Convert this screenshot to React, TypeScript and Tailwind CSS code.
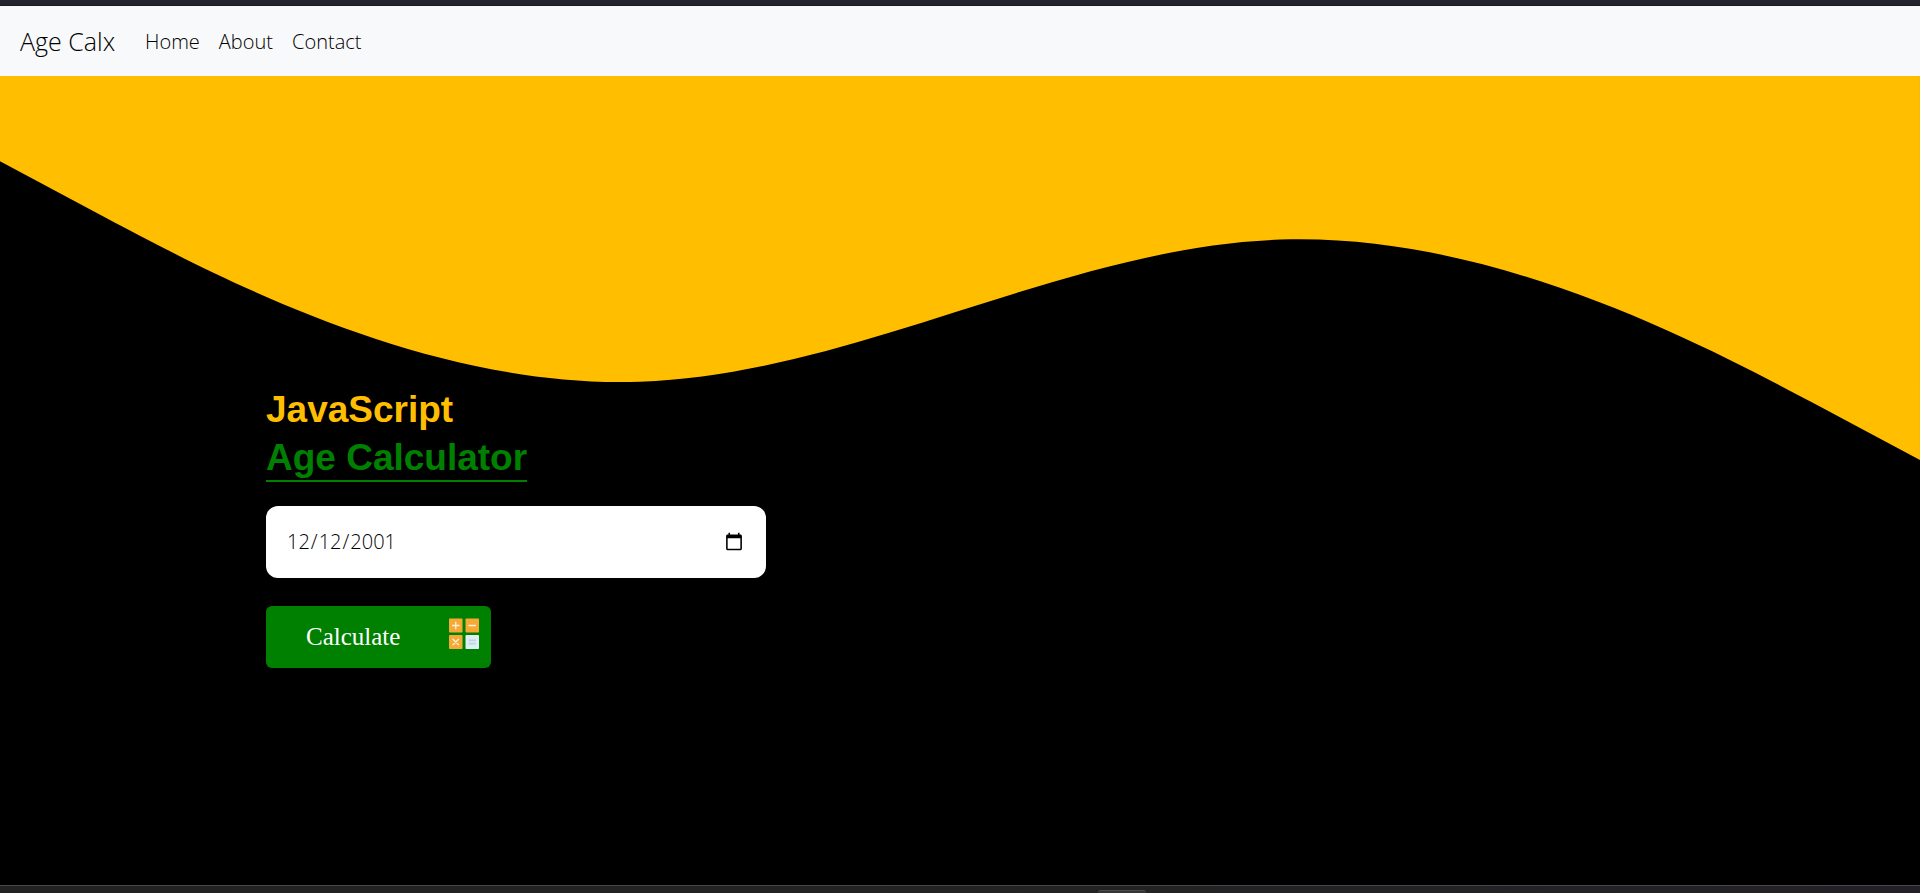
import React, { useState } from "react";

const links = ["Home", "About", "Contact"];

function Wave() {
  return (
    <svg
      className="absolute inset-x-0 top-0 w-full"
      viewBox="0 0 1440 320"
      aria-hidden="true"
    >
      <path
        fill="#ffbf00"
        d="M0,64L80,106.7C160,149,320,235,480,229.3C640,224,800,128,960,122.7C1120,117,1280,203,1360,245.3L1440,288L1440,0L0,0Z"
      />
    </svg>
  );
}

function CalculatorIcon() {
  return (
    <svg className="h-8 w-8" viewBox="0 0 32 32" aria-hidden="true">
      <g fill="#f7a935">
        <rect x="1" y="0.5" width="13.5" height="14" rx="0.8" />
        <rect x="17.5" y="0.5" width="13.5" height="14" rx="0.8" />
        <rect x="1" y="17" width="13.5" height="14" rx="0.8" />
      </g>
      <rect x="17.5" y="17" width="13.5" height="14" rx="0.8" fill="#dfedf4" />
      <g stroke="#fdf0dc" strokeWidth="1.3" strokeLinecap="round">
        <path d="M4.5 7.5h6.5M7.75 4.2v6.6M21 7.5h6.5M5 21.2l5.5 5.6M10.5 21.2L5 26.8" />
      </g>
      <path d="M20.8 22.3h7M20.8 25.7h7" stroke="#bcd5df" strokeWidth="1.8" />
    </svg>
  );
}

export default function App() {
  const [birthday, setBirthday] = useState("2001-12-12");

  return (
    <div className="flex min-h-screen flex-col bg-black font-['Open_Sans','Noto_Sans',sans-serif]">
      <div className="h-1.5 border-b border-[#1d1522] bg-[#21232d]" />
      <nav className="flex h-[70px] items-center gap-[30px] bg-[#f8f9fa] px-5 pt-px font-[350] text-black">
        <a href="#" className="text-[25px]">
          Age Calx
        </a>
        <ul className="flex gap-[19px] text-xl">
          {links.map((link) => (
            <li key={link}>
              <a href={"#" + link.toLowerCase()}>{link}</a>
            </li>
          ))}
        </ul>
      </nav>

      <main className="relative grow">
        <Wave />
        <form
          className="relative ml-[266px] flex w-[500px] max-w-full flex-col items-start pt-[312px]"
          onSubmit={(event) => event.preventDefault()}
        >
          <h1 className="flex flex-col items-start gap-1 font-['Liberation_Sans',sans-serif] text-[37px] leading-[44px] font-bold">
            <span className="text-[#ffbf00]">JavaScript</span>
            <span className="border-b-2 border-[#008000] text-[#008000]">
              Age Calculator
            </span>
          </h1>
          <input
            type="date"
            aria-label="Date of birth"
            value={birthday}
            onChange={(event) => setBirthday(event.target.value)}
            className="mt-6 h-[72px] w-full rounded-xl bg-white px-5 text-xl font-[350] text-black"
          />
          <button
            type="submit"
            className="mt-7 flex h-[62px] w-[225px] items-center justify-between rounded-md bg-[#008000] pr-[11px] pl-10 font-['Liberation_Serif',serif] text-[25px] text-white"
          >
            Calculate
            <span className="pb-1.5">
              <CalculatorIcon />
            </span>
          </button>
        </form>
      </main>

      <footer className="flex h-2 items-end border-t border-[#48464a] bg-linear-to-r from-[#222222] via-[#232323] to-[#232127]">
        <div className="ml-[57.2%] h-[3px] w-12 rounded-t-sm border-t border-[#4a4a4a] bg-[#333536]" />
      </footer>
    </div>
  );
}
